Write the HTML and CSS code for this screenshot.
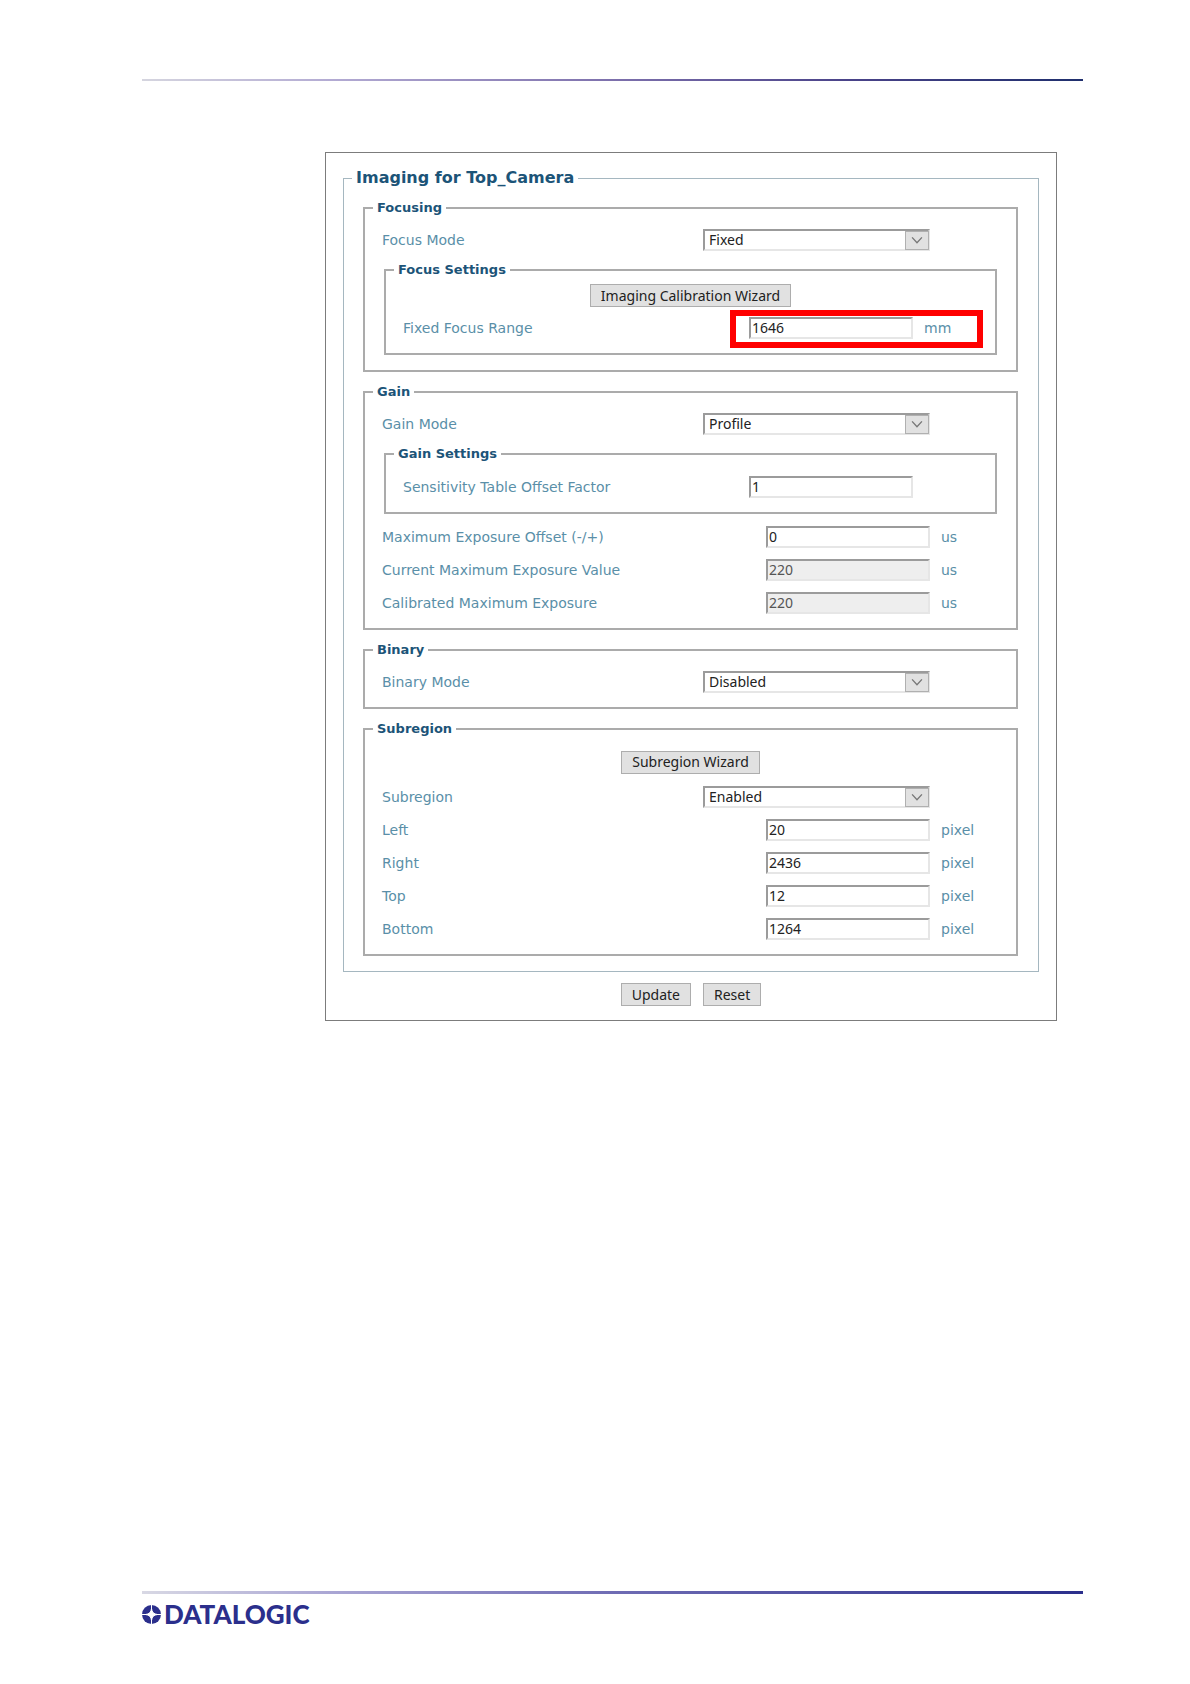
FILE: index.html
```html
<!DOCTYPE html>
<html lang="en">
<head>
<meta charset="utf-8">
<title>Imaging for Top_Camera</title>
<link rel="stylesheet" href="styles.css">
</head>
<body>
<div class="page">
  <header class="rule"></header>
  <main class="content">
    <form class="panel">
      <fieldset class="section">
        <legend class="section-title">Imaging for Top_Camera</legend>

        <fieldset class="group">
          <legend>Focusing</legend>
          <div class="row">
            <label for="focus-mode">Focus Mode</label>
            <span class="select"><select id="focus-mode"><option>Fixed</option></select><svg class="arrow" viewBox="0 0 23 19"><path d="M6 6l5.500 6 5.500-6"/></svg></span>
          </div>
          <fieldset class="subgroup">
            <legend>Focus Settings</legend>
            <div class="wizard"><button type="button">Imaging Calibration Wizard</button></div>
            <div class="row marked">
              <label for="focus-range">Fixed Focus Range</label>
              <input id="focus-range" type="text" value="1646">
              <span class="unit">mm</span>
            </div>
          </fieldset>
        </fieldset>

        <fieldset class="group">
          <legend>Gain</legend>
          <div class="row">
            <label for="gain-mode">Gain Mode</label>
            <span class="select"><select id="gain-mode"><option>Profile</option></select><svg class="arrow" viewBox="0 0 23 19"><path d="M6 6l5.500 6 5.500-6"/></svg></span>
          </div>
          <fieldset class="subgroup roomy">
            <legend>Gain Settings</legend>
            <div class="row">
              <label for="sensitivity">Sensitivity Table Offset Factor</label>
              <input id="sensitivity" type="text" value="1">
            </div>
          </fieldset>
          <div class="row">
            <label for="max-offset">Maximum Exposure Offset (-/+)</label>
            <input id="max-offset" type="text" value="0">
            <span class="unit">us</span>
          </div>
          <div class="row">
            <label for="current-max">Current Maximum Exposure Value</label>
            <input id="current-max" type="text" value="220" disabled>
            <span class="unit">us</span>
          </div>
          <div class="row">
            <label for="calibrated-max">Calibrated Maximum Exposure</label>
            <input id="calibrated-max" type="text" value="220" disabled>
            <span class="unit">us</span>
          </div>
        </fieldset>

        <fieldset class="group">
          <legend>Binary</legend>
          <div class="row">
            <label for="binary-mode">Binary Mode</label>
            <span class="select"><select id="binary-mode"><option>Disabled</option></select><svg class="arrow" viewBox="0 0 23 19"><path d="M6 6l5.500 6 5.500-6"/></svg></span>
          </div>
        </fieldset>

        <fieldset class="group">
          <legend>Subregion</legend>
          <div class="wizard tall"><button type="button">Subregion Wizard</button></div>
          <div class="row">
            <label for="subregion">Subregion</label>
            <span class="select"><select id="subregion"><option>Enabled</option></select><svg class="arrow" viewBox="0 0 23 19"><path d="M6 6l5.500 6 5.500-6"/></svg></span>
          </div>
          <div class="row">
            <label for="left">Left</label>
            <input id="left" type="text" value="20">
            <span class="unit">pixel</span>
          </div>
          <div class="row">
            <label for="right">Right</label>
            <input id="right" type="text" value="2436">
            <span class="unit">pixel</span>
          </div>
          <div class="row">
            <label for="top">Top</label>
            <input id="top" type="text" value="12">
            <span class="unit">pixel</span>
          </div>
          <div class="row">
            <label for="bottom">Bottom</label>
            <input id="bottom" type="text" value="1264">
            <span class="unit">pixel</span>
          </div>
        </fieldset>
      </fieldset>
      <div class="actions">
        <button type="submit">Update</button>
        <button type="reset">Reset</button>
      </div>
    </form>
  </main>
  <footer class="footer">
    <div class="rule thick"></div>
    <div class="brand">
      <svg class="brand-mark" viewBox="0 0 19 19"><circle cx="9.500" cy="9.500" r="9.500"/><path class="star" d="M9.500 3.500Q10 9 15.500 9.500Q10 10 9.500 15.500Q9 10 3.500 9.500Q9 9 9.500 3.500Z"/><path class="cross" d="M9.500 0v19M0 9.500h19"/></svg>
      <span class="brand-name">DATALOGIC</span>
    </div>
  </footer>
</div>
</body>
</html>
```
FILE: styles.css
```css
*, *::after { box-sizing: border-box; }

body {
  margin: 0;
  background: #fff;
  color: #5a8fa8;
  font-family: "DejaVu Sans", Verdana, sans-serif;
  font-size: 14px;
  line-height: 18px;
}

.page {
  display: flex;
  flex-direction: column;
  min-height: 100vh;
  padding: 79px 107px 60px 142px;
}

.rule {
  height: 2px;
  background: linear-gradient(to right, #d5d5df, #b3abd3 20%, #7d70ac 50%, #4a4389 75%, #1f2f6d);
}

.rule.thick {
  height: 3px;
  background: linear-gradient(to right, #d8d8e4, #aaa6d4 20%, #6f6cb4 50%, #2b2f8c);
}

.content {
  flex: 1;
  margin: 71px 26px 0 183px;
}

.panel {
  padding: 14px 17px;
  border: 1px solid #7c7c7c;
}

fieldset {
  min-width: 0;
  margin: 0;
  padding: 0;
}

legend {
  margin-left: 8px;
  padding: 0 4px;
  color: #1c5478;
  font-size: 13px;
  font-weight: bold;
  line-height: 18px;
}

.section {
  padding: 10px 20px 15px 19px;
  border: 1px solid #a5b7c0;
}

.section-title {
  margin-left: -11px;
  font-size: 16px;
  line-height: 22px;
}

.group {
  padding: 6px 0 9px;
  border: 2px solid #ababab;
}

.group + .group { margin-top: 11px; }

.group > .row { --unit-width: 86px; }

.subgroup {
  --unit-width: 82px;
  margin: 5px 19px 6px;
  padding: 5px 0 9px;
  border: 2px solid #ababab;
}

.subgroup.roomy { padding-top: 7px; }

.row {
  display: grid;
  grid-template-columns: 1fr auto var(--unit-width);
  align-items: center;
  height: 33px;
  padding-left: 17px;
}

.unit { padding-left: 11px; }

.wizard {
  display: flex;
  justify-content: center;
  align-items: center;
  margin-bottom: 4px;
}

.wizard.tall {
  height: 36px;
  margin-bottom: 0;
}

button, input, select {
  height: 22px;
  margin: 0;
  color: #222;
  font-family: "Noto Sans", Tahoma, sans-serif;
  font-size: 14px;
  line-height: 18px;
}

button {
  height: 23px;
  padding: 0 10px;
  background: #e1e1e1;
  border: 1px solid #adadad;
}

input, select {
  background: #fff;
  border: 2px solid;
  border-color: #9b9b9b #e6e6e6 #e6e6e6 #9b9b9b;
  border-radius: 0;
}

input {
  width: 164px;
  padding: 0 1px;
}

input:disabled {
  background: #eee;
  color: #555;
}

.select {
  position: relative;
  display: flex;
}

select {
  width: 227px;
  padding: 0 4px;
  appearance: none;
}

.arrow {
  position: absolute;
  top: 2px;
  right: 1px;
  width: 24px;
  height: 19px;
  background: #e1e1e1;
  border: 1px solid #b0b0b0;
  fill: none;
  stroke: #777;
  stroke-width: 1.500;
  pointer-events: none;
}

.marked { position: relative; }

.marked::after {
  content: "";
  position: absolute;
  top: -1px;
  right: 12px;
  width: 253px;
  height: 38px;
  border: 6px solid #f00;
  pointer-events: none;
}

.actions {
  display: flex;
  justify-content: center;
  gap: 12px;
  margin-top: 11px;
}

.brand {
  display: flex;
  align-items: center;
  gap: 3px;
  height: 20px;
  margin-top: 10px;
  color: #2b2f8c;
}

.brand-mark {
  width: 19px;
  height: 19px;
  fill: #2b2f8c;
}

.star { fill: #fff; stroke: #fff; }

.cross { stroke: #fff; stroke-width: 1; }

.brand-name {
  font-family: Lato, sans-serif;
  font-size: 26px;
  font-weight: 900;
  line-height: 20px;
}
```
